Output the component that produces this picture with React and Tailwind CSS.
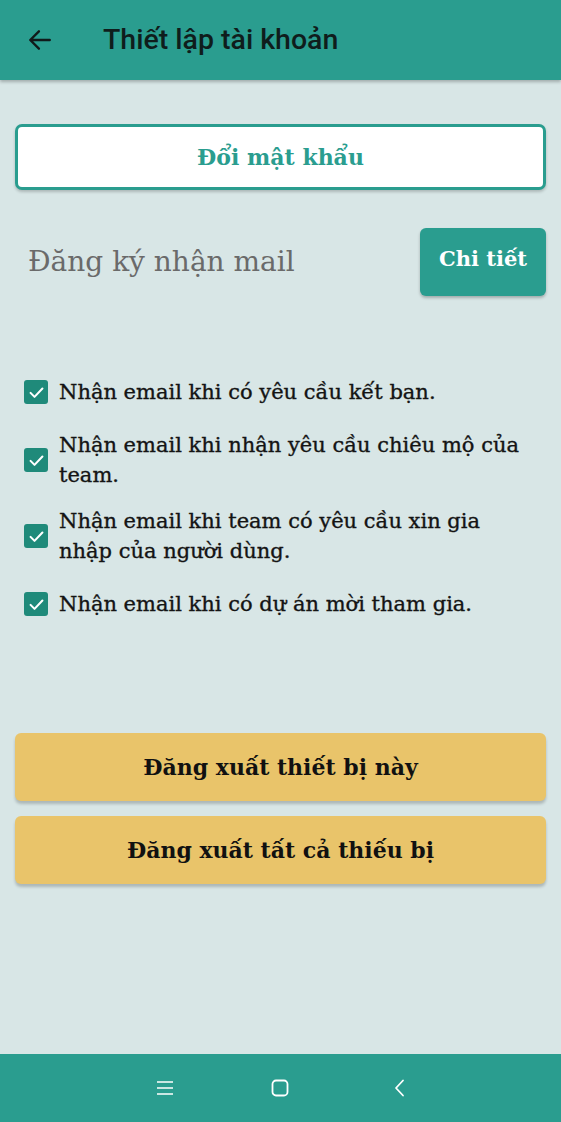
import React from "react";

const serif = { fontFamily: '"DejaVu Serif", "Liberation Serif", serif' };

function Check() {
  return (
    <span className="flex h-[24px] w-[24px] shrink-0 items-center justify-center rounded-[3px] bg-[#1f8a7a]">
      <svg width="19" height="19" viewBox="0 0 24 24" fill="none" stroke="white" strokeWidth="2.6" strokeLinecap="round" strokeLinejoin="round">
        <path d="M4.5 12.5l5 5L19.5 7" />
      </svg>
    </span>
  );
}

function Item({ children }) {
  return (
    <div className="flex min-h-[44px] items-center gap-[11px]">
      <Check />
      <span className="text-[21px] leading-[30px] text-[#141414] [-webkit-text-stroke:0.35px_#141414]" style={serif}>{children}</span>
    </div>
  );
}

export default function App() {
  return (
    <div className="flex h-[1122px] w-full flex-col bg-[#d8e6e6]">
      <header className="z-10 flex h-[80px] shrink-0 items-center bg-[#2a9d8f] shadow-[0_2px_3px_rgba(0,0,0,0.25)]">
        <svg className="ml-[27px]" width="26" height="26" viewBox="0 0 24 24" fill="none" stroke="#101a1a" strokeWidth="2.2" strokeLinecap="round" strokeLinejoin="round">
          <path d="M21 12H3.5M11 4l-8 8 8 8" />
        </svg>
        <h1 className="ml-[50px] text-[28.5px] font-medium text-[#0f1d1c]" style={{ fontFamily: 'Roboto, "Noto Sans", sans-serif' }}>
          Thiết lập tài khoản
        </h1>
      </header>

      <main className="flex flex-1 flex-col px-[15px] pt-[44px]">
        <button className="flex h-[66px] items-center justify-center rounded-[7px] border-[3px] border-[#2a9d8f] bg-white text-[22px] font-bold text-[#2a9d8f] shadow-[0_2px_3px_rgba(0,0,0,0.2)]" style={serif}>
          Đổi mật khẩu
        </button>

        <div className="mt-[38px] flex items-center justify-between">
          <span className="pl-[13px] text-[28px] text-[#6a6a6a]" style={serif}>Đăng ký nhận mail</span>
          <button className="flex h-[68px] w-[126px] items-center justify-center rounded-[6px] bg-[#2a9d8f] pb-[6px] text-[21px] font-bold text-white shadow-[0_2px_3px_rgba(0,0,0,0.25)]" style={serif}>
            Chi tiết
          </button>
        </div>

        <div className="mt-[74px] flex flex-col gap-[16px] pl-[9px] pr-[13px]">
          <Item>Nhận email khi có yêu cầu kết bạn.</Item>
          <Item>Nhận email khi nhận yêu cầu chiêu mộ của team.</Item>
          <Item>Nhận email khi team có yêu cầu xin gia nhập của người dùng.</Item>
          <Item>Nhận email khi có dự án mời tham gia.</Item>
        </div>

        <div className="mt-[107px] flex flex-col gap-[15px]">
          <button className="flex h-[68px] items-center justify-center rounded-[6px] bg-[#e9c46a] text-[22px] font-bold text-[#111] shadow-[0_3px_3px_rgba(0,0,0,0.2)]" style={serif}>
            Đăng xuất thiết bị này
          </button>
          <button className="flex h-[68px] items-center justify-center rounded-[6px] bg-[#e9c46a] text-[22px] font-bold text-[#111] shadow-[0_3px_3px_rgba(0,0,0,0.2)]" style={serif}>
            Đăng xuất tất cả thiếu bị
          </button>
        </div>
      </main>

      <nav className="flex h-[68px] shrink-0 items-center bg-[#2a9d8f]">
        <div className="flex w-full items-center">
          <svg className="ml-[156px]" width="18" height="16" viewBox="0 0 18 16" fill="none" stroke="white" strokeWidth="1.6">
            <path d="M1 2h16M1 8h16M1 14h16" />
          </svg>
          <svg className="ml-[97px]" width="18" height="18" viewBox="0 0 18 18" fill="none" stroke="white" strokeWidth="1.8">
            <rect x="1.5" y="1.5" width="15" height="15" rx="3.5" />
          </svg>
          <svg className="ml-[104px]" width="12" height="18" viewBox="0 0 12 18" fill="none" stroke="white" strokeWidth="1.8" strokeLinecap="round" strokeLinejoin="round">
            <path d="M10 1.5L3 9l7 7.5" />
          </svg>
        </div>
      </nav>
    </div>
  );
}
